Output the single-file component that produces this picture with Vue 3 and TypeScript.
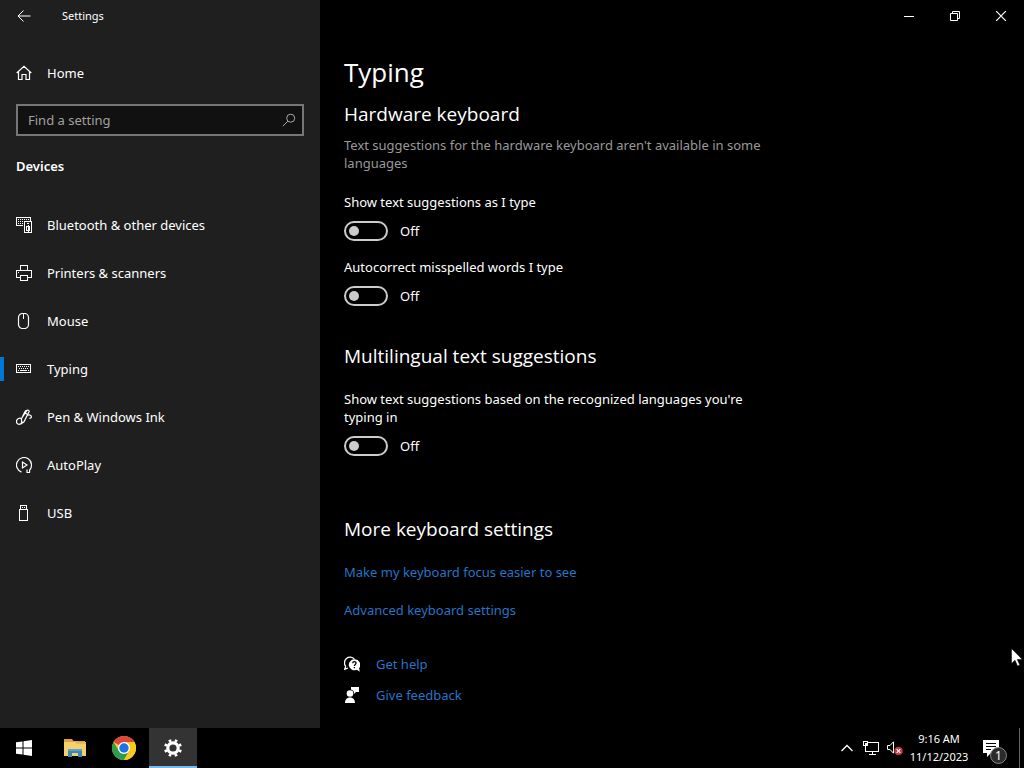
<script setup lang="ts">
import { ref } from 'vue'

interface Toggle {
  id: string
  label: string
  on: boolean
}

const pages = ['Bluetooth & other devices', 'Printers & scanners', 'Mouse', 'Typing', 'Pen & Windows Ink', 'AutoPlay', 'USB']
const current = ref('Typing')
const query = ref('')

const hardware = ref<Toggle[]>([
  { id: 'suggest', label: 'Show text suggestions as I type', on: false },
  { id: 'autocorrect', label: 'Autocorrect misspelled words I type', on: false },
])
const multilingual = ref<Toggle[]>([
  { id: 'multi', label: "Show text suggestions based on the recognized languages you're typing in", on: false },
])
</script>

<template>
  <div class="desktop">
    <div class="window">
      <aside class="sidebar">
        <header class="titlebar">
          <button class="back" type="button" aria-label="Back">
            <svg width="14" height="12" viewBox="0 0 14 12" class="line"><path d="M6.500.500 1 6l5.500 5.500M1 6h12.500" /></svg>
          </button>
          <span class="app-name">Settings</span>
        </header>

        <a class="row home" href="#home">
          <svg width="16" height="16" viewBox="0 0 16 16" class="line"><path d="M.7 8 8 1.200 15.300 8M2.500 6.500v8h3.500v-5h4v5h3.500v-8" stroke-width="1.200" /></svg>
          <span>Home</span>
        </a>

        <div class="search">
          <input v-model="query" type="text" placeholder="Find a setting" aria-label="Find a setting" />
          <button type="button" aria-label="Search">
            <svg width="14" height="14" viewBox="0 0 14 14" class="line"><circle cx="8.700" cy="5.200" r="4" /><path d="M5.900 8.100.8 13.200" /></svg>
          </button>
        </div>

        <h2 class="category">Devices</h2>

        <nav>
          <a
            v-for="page in pages"
            :key="page"
            class="row"
            :class="{ active: page === current }"
            href="#page"
            @click.prevent="current = page"
          >
            <svg v-if="page.startsWith('Blue')" width="16" height="16" viewBox="0 0 16 16" class="line" shape-rendering="crispEdges">
              <path d="M7 8.500H.5v-8h14v3" /><path d="M2 2.500h11M2 4.500h5M2 6.500h5" stroke-dasharray="1 1" />
              <path d="M8.500 4.500h7v11h-7z" /><path d="M11 6.500h2M10.500 9.500h3v4h-3zM12 8v7" />
            </svg>
            <svg v-else-if="page.startsWith('Print')" width="16" height="16" viewBox="0 0 16 16" class="line" shape-rendering="crispEdges">
              <path d="M4.500 5V.5h7V5M4.500 12.500h-4v-7h15v7h-4M4.500 10.500h7v5h-7zM2 7.500h1" />
            </svg>
            <svg v-else-if="page === 'Mouse'" width="16" height="16" viewBox="0 0 16 16" class="line">
              <rect x="2.500" y=".5" width="10" height="15" rx="4" stroke-width="1.200" /><path d="M7.500 1v5" />
            </svg>
            <svg v-else-if="page === 'Typing'" width="16" height="16" viewBox="0 0 16 16" class="line" shape-rendering="crispEdges">
              <path d="M.5 3.500h14v8H.5z" /><path d="M2 5.500h11M3 7.500h10" stroke-dasharray="1 1" /><path d="M2 9.500h1M4 9.500h7M12 9.500h1" />
            </svg>
            <svg v-else-if="page.startsWith('Pen')" width="16" height="16" viewBox="0 0 16 16" class="line">
              <path d="M5.500 9.500 10.800 1.600c.8-1.200 2.800-.2 2.200 1.200L8 12.800l-2.500 1.700zM9.500 4.200l1.700 1M5.500 9.500C3 8.500.5 10 .5 12.500s2.300 3.300 4 2.400L7 13M6.200 8.200 9 2.500c.3-.7.900-1.200 1.600-1.200M11.700 6.200c2-.7 3.700.2 3.700 1.500 0 1.200-1.100 1.800-2 1.300" stroke-width="1.200" />
            </svg>
            <svg v-else-if="page === 'AutoPlay'" width="16" height="16" viewBox="0 0 16 16" class="line">
              <path d="M5.500 15.100A7.500 7.500 0 1 1 13.600 13v2.500M10.500 15.500h3.500M11 12.500v3" stroke-width="1.200" /><path d="M6.500 5v6l4.500-3z" stroke-width="1.200" />
            </svg>
            <svg v-else width="16" height="16" viewBox="0 0 16 16" class="line" shape-rendering="crispEdges">
              <path d="M4.500 4V.5h6V4M3.500 4.500h8v11h-8zM6 2.500h1M8 2.500h1" />
            </svg>
            <span>{{ page }}</span>
          </a>
        </nav>
      </aside>

      <main class="content">
        <div class="window-buttons">
          <button type="button" aria-label="Minimize"><svg width="10" height="10" viewBox="0 0 10 10" class="line"><path d="M0 5.500h10" /></svg></button>
          <button type="button" aria-label="Restore"><svg width="10" height="10" viewBox="0 0 10 10" class="line"><path d="M.5 2.500h7v7h-7zM2.500 2V.5h7v7H8" /></svg></button>
          <button type="button" aria-label="Close"><svg width="10" height="10" viewBox="0 0 10 10" class="line"><path d="m0 0 10 10M10 0 0 10" stroke-width="1.200" /></svg></button>
        </div>

        <div class="page">
          <h1>Typing</h1>

          <section>
            <h2>Hardware keyboard</h2>
            <p class="note">Text suggestions for the hardware keyboard aren't available in some languages</p>
            <div v-for="item in hardware" :key="item.id" class="setting">
              <label :for="item.id">{{ item.label }}</label>
              <div class="switch">
                <input :id="item.id" v-model="item.on" type="checkbox" role="switch" />
                <span>{{ item.on ? 'On' : 'Off' }}</span>
              </div>
            </div>
          </section>

          <section class="multilingual">
            <h2>Multilingual text suggestions</h2>
            <div v-for="item in multilingual" :key="item.id" class="setting">
              <label :for="item.id">{{ item.label }}</label>
              <div class="switch">
                <input :id="item.id" v-model="item.on" type="checkbox" role="switch" />
                <span>{{ item.on ? 'On' : 'Off' }}</span>
              </div>
            </div>
          </section>

          <section class="more">
            <h2>More keyboard settings</h2>
            <a href="#focus">Make my keyboard focus easier to see</a>
            <a href="#advanced">Advanced keyboard settings</a>
          </section>

          <footer class="support">
            <div class="support-row">
              <svg width="16" height="16" viewBox="0 0 16 16">
                <path d="M1.800 10.500A5.200 5.200 0 1 1 10.400 3.200M1.800 10.200.7 13.300 4 12" fill="none" stroke="#fff" stroke-width="1.300" />
                <path d="M10.300 3.300a5.500 5.500 0 1 0 2.500 10.400l3 2-.7-3.500A5.500 5.500 0 0 0 10.300 3.300z" fill="#fff" />
                <path d="M8.700 7.200c.1-2.200 3.500-2 3.300.1-.1 1.100-1.600 1.200-1.600 2.600M10.400 11v1.300" fill="none" stroke="#000" stroke-width="1.300" />
              </svg>
              <a href="#help">Get help</a>
            </div>
            <div class="support-row">
              <svg width="16" height="16" viewBox="0 0 16 16" fill="#fff">
                <circle cx="6" cy="6.500" r="3.300" /><path d="M1 16c0-7.200 10-7.200 10 0zM7 0h8v5h-3l-2 2V5L8.600 3.300 7 2.500z" />
              </svg>
              <a href="#feedback">Give feedback</a>
            </div>
          </footer>
        </div>
      </main>
    </div>

    <footer class="taskbar">
      <div class="apps">
        <button class="start" type="button" aria-label="Start">
          <svg width="16" height="16" viewBox="0 0 16 16" fill="#fff"><path d="M0 2.300 6.500 1.400v6.100H0zM7.500 1.200 16 0v7.500H7.500zM0 8.500h6.500v6.100L0 13.700zM7.500 8.500H16V16l-8.500-1.200z" /></svg>
        </button>
        <button type="button" aria-label="File Explorer">
          <svg width="22" height="18" viewBox="0 0 22 18">
            <path d="M0 0h8l1.500 2H21v3H0z" fill="#d9a441" /><path d="M0 3h22v14H0z" fill="#f5d06c" /><path d="M12 3h10v2H12z" fill="#e8bb52" />
            <path d="M4 10h14v8h-4v-4H8v4H4z" fill="#3c87b7" /><path d="M4 10h14v2H4z" fill="#5ba3cb" />
          </svg>
        </button>
        <button type="button" aria-label="Google Chrome">
          <svg width="24" height="24" viewBox="0 0 24 24">
            <circle cx="12" cy="12" r="12" fill="#fbc91d" />
            <path d="M12 12 1.600 6A12 12 0 0 1 22.400 6H12z" fill="#dd4639" />
            <path d="M12 12 6.800 15 1.600 6A12 12 0 0 0 12 24l5.200-9z" fill="#2b9d4d" />
            <path d="M12 6h10.400A12 12 0 0 1 12 24l5.200-9z" fill="#fbc91d" />
            <circle cx="12" cy="12" r="6" fill="#fff" /><circle cx="12" cy="12" r="4.700" fill="#1a73e8" />
          </svg>
        </button>
        <button class="running" type="button" aria-label="Settings">
          <svg width="18" height="18" viewBox="0 0 18 18" fill="none" stroke="#fff">
            <circle cx="9" cy="9" r="5.200" stroke-width="3.200" />
            <circle cx="9" cy="9" r="7.700" stroke-width="2.600" pathLength="80" stroke-dasharray="4.500 5.500" stroke-dashoffset="2.250" transform="rotate(22.500 9 9)" />
          </svg>
        </button>
      </div>

      <div class="tray">
        <button class="chevron" type="button" aria-label="Show hidden icons">
          <svg width="12" height="8" viewBox="0 0 12 8" class="line"><path d="m.5 7 5.500-5.500L11.500 7" stroke-width="1.300" /></svg>
        </button>
        <button class="network" type="button" aria-label="Network">
          <svg width="16" height="14" viewBox="0 0 16 14" class="line" shape-rendering="crispEdges"><path d="M5 1.500h10.500v9h-13V5M9.500 11v2M6 13.500h7M.5.5h4v4h-4z" /><path d="M2 2h1v1H2z" /></svg>
        </button>
        <button class="volume" type="button" aria-label="Volume, muted">
          <svg width="16" height="15" viewBox="0 0 16 15">
            <path d="M.5 4.500H3l3.500-3.700v11.400L3 8.500H.5z" class="line" />
            <circle cx="11.500" cy="10" r="4.300" fill="#c9343f" /><path d="m9.700 8.200 3.600 3.600m0-3.600-3.600 3.600" stroke="#fff" stroke-width="1.200" />
          </svg>
        </button>
        <button class="clock" type="button"><span>9:16 AM</span><span>11/12/2023</span></button>
        <button class="notifications" type="button" aria-label="1 new notification">
          <svg width="17" height="17" viewBox="0 0 17 17"><path d="M0 0h16v13H8l-4 4v-4H0z" fill="#fff" /><path d="M3 3.500h10M3 6.500h10M3 9.500h5" stroke="#000" /></svg>
          <span class="badge">1</span>
        </button>
        <button class="show-desktop" type="button" aria-label="Show desktop"></button>
      </div>
    </footer>

    <svg class="pointer" width="12" height="19" viewBox="0 0 12 19"><path d="M.5.5v15l3.500-3.300L6.500 18l2.300-1-2.500-5.500h5z" fill="#fff" stroke="#000" stroke-width=".5" /></svg>
  </div>
</template>

<style>
body {
  background: #000;
}
</style>

<style scoped>
.desktop {
  position: relative;
  display: flex;
  flex-direction: column;
  min-height: 100vh;
  overflow: hidden;
  background: #000;
  color: #fff;
  font: 13px/18px 'Noto Sans', sans-serif;
}
.desktop * {
  box-sizing: border-box;
}
button {
  display: flex;
  align-items: center;
  justify-content: center;
  padding: 0;
  border: 0;
  background: none;
  color: inherit;
  font: inherit;
}
svg {
  display: block;
  flex: none;
}
.line {
  fill: none;
  stroke: #fff;
}
h1,
h2,
p {
  margin: 0;
  font-weight: 400;
}
a {
  color: #2674c6;
  text-decoration: none;
}
.window {
  flex: 1;
  display: grid;
  grid-template-columns: 320px 1fr;
}
.sidebar {
  background: #1f1f1f;
}
.titlebar {
  display: flex;
  align-items: center;
  height: 32px;
  font-size: 11px;
}
.back {
  width: 48px;
  height: 32px;
}
.app-name {
  margin-left: 14px;
}
.row {
  position: relative;
  display: flex;
  align-items: center;
  gap: 15px;
  height: 48px;
  padding-left: 16px;
  color: #fff;
}
.home {
  margin-top: 17px;
}
.active::before {
  content: '';
  position: absolute;
  left: 0;
  width: 4px;
  height: 24px;
  background: #0078d7;
}
.search {
  display: flex;
  height: 32px;
  margin: 7px 16px 0;
  border: 2px solid #767676;
  background: #111;
}
.search input {
  flex: 1;
  min-width: 0;
  padding: 0 10px;
  border: 0;
  outline: 0;
  background: none;
  color: #fff;
  font: inherit;
}
.search input::placeholder {
  color: #a0a0a0;
  opacity: 1;
}
.search button {
  width: 26px;
}
.search .line {
  stroke: #a8a8a8;
}
.category {
  margin: 21px 16px 26px;
  font-size: 13px;
  font-weight: 600;
}
.window-buttons {
  display: flex;
  justify-content: flex-end;
  height: 32px;
}
.window-buttons button {
  width: 46px;
}
.page {
  max-width: 460px;
  padding: 23px 12px 24px 24px;
}
h1 {
  font-family: 'Open Sans', sans-serif;
  font-size: 26px;
  line-height: 34px;
}
.page h2 {
  font-family: 'Open Sans', sans-serif;
  font-size: 19px;
  line-height: 28px;
}
.page section:first-of-type {
  margin-top: 11px;
}
.note {
  margin-top: 8px;
  color: #999;
}
.setting {
  margin-top: 17px;
}
.note + .setting {
  margin-top: 21px;
}
.setting label {
  display: block;
}
.switch {
  display: flex;
  align-items: center;
  gap: 12px;
  height: 20px;
  margin-top: 10px;
}
.switch input {
  appearance: none;
  width: 44px;
  height: 20px;
  margin: 0;
  padding: 3px;
  border: 2px solid #ccc;
  border-radius: 10px;
}
.switch input::before {
  content: '';
  display: block;
  width: 10px;
  height: 10px;
  border-radius: 50%;
  background: #ccc;
}
.switch input:checked {
  border-color: #0078d7;
  background: #0078d7;
}
.switch input:checked::before {
  margin-left: auto;
  background: #fff;
}
.multilingual {
  margin-top: 36px;
}
.multilingual .setting {
  margin-top: 20px;
}
.more {
  display: flex;
  flex-direction: column;
  align-items: flex-start;
  gap: 20px;
  margin-top: 59px;
}
.support {
  display: grid;
  gap: 13px;
  margin-top: 36px;
}
.support-row {
  display: flex;
  align-items: center;
  gap: 16px;
}
.taskbar {
  display: flex;
  justify-content: space-between;
  height: 40px;
}
.apps,
.tray {
  display: flex;
}
.apps {
  gap: 1px;
}
.apps button {
  width: 48px;
}
.apps .start {
  margin-right: 2px;
}
.apps .running {
  border-top: 2px solid #333;
  border-bottom: 2px solid #76b9ed;
  background: #333;
}
.chevron {
  width: 22px;
}
.network {
  width: 26px;
}
.volume {
  width: 22px;
}
.tray .clock {
  flex-direction: column;
  width: 60px;
  margin-left: 3px;
  font-size: 11px;
}
.notifications {
  position: relative;
  width: 44px;
}
.badge {
  position: absolute;
  left: 21px;
  top: 19px;
  width: 17px;
  height: 17px;
  border: 1px solid #888;
  border-radius: 50%;
  background: #2b2b2b;
  font-size: 12px;
  line-height: 15px;
}
.show-desktop {
  width: 5px;
  margin-left: 6px;
  border-left: 1px solid #666;
}
.pointer {
  position: absolute;
  right: 1px;
  top: 648px;
  pointer-events: none;
}
</style>
